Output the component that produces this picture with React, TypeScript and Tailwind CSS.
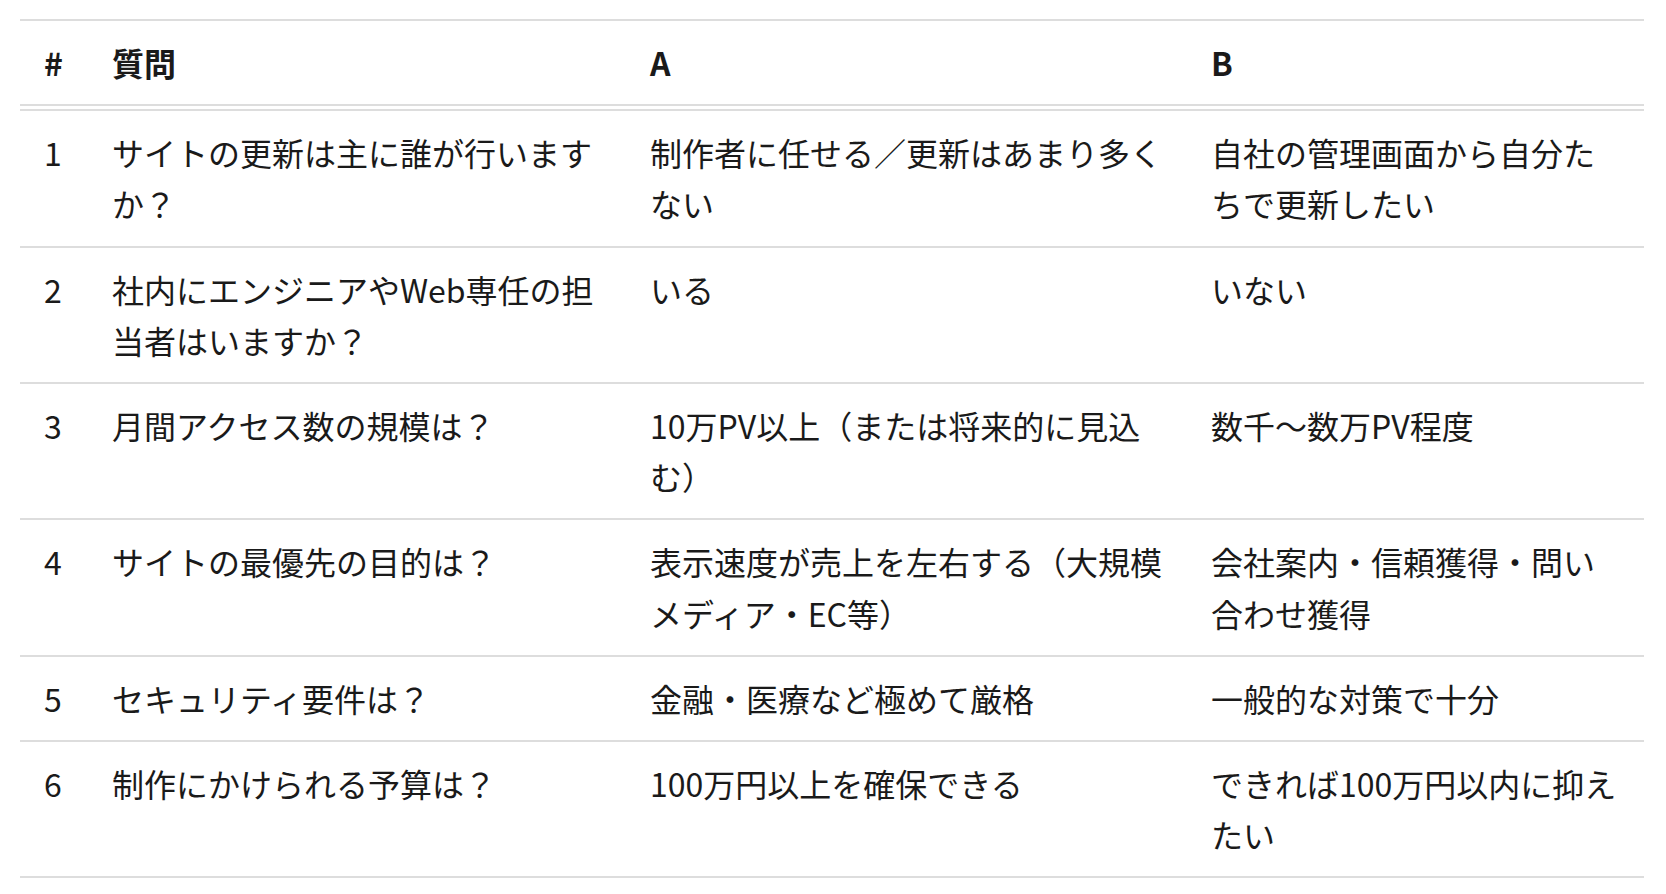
const rows = [
  {
    no: "1",
    q: "サイトの更新は主に誰が行いますか？",
    a: "制作者に任せる／更新はあまり多くない",
    b: "自社の管理画面から自分たちで更新したい",
  },
  {
    no: "2",
    q: "社内にエンジニアやWeb専任の担当者はいますか？",
    a: "いる",
    b: "いない",
  },
  {
    no: "3",
    q: "月間アクセス数の規模は？",
    a: "10万PV以上（または将来的に見込む）",
    b: "数千〜数万PV程度",
  },
  {
    no: "4",
    q: "サイトの最優先の目的は？",
    a: "表示速度が売上を左右する（大規模メディア・EC等）",
    b: "会社案内・信頼獲得・問い合わせ獲得",
  },
  {
    no: "5",
    q: "セキュリティ要件は？",
    a: "金融・医療など極めて厳格",
    b: "一般的な対策で十分",
  },
  {
    no: "6",
    q: "制作にかけられる予算は？",
    a: "100万円以上を確保できる",
    b: "できれば100万円以内に抑えたい",
  },
];

export default function App() {
  return (
    <div
      className="min-h-screen bg-white px-5 pt-[19px] text-[#1a1a1a]"
      style={{ fontFamily: '"Noto Sans CJK JP", "Noto Sans", sans-serif' }}
    >
      <table className="w-[1624px] table-fixed border-collapse text-[32px] leading-[1.6]">
        <colgroup>
          <col className="w-[68px]" />
          <col className="w-[538px]" />
          <col className="w-[561px]" />
          <col className="w-[457px]" />
        </colgroup>
        <thead>
          <tr className="border-t-2 border-b-[7px] border-double border-t-[#dddddd] border-b-[#dddddd] [border-top-style:solid]">
            <th className="px-6 py-4 text-left font-bold">#</th>
            <th className="px-6 py-4 text-left font-bold">質問</th>
            <th className="px-6 py-4 text-left font-bold">A</th>
            <th className="px-6 py-4 text-left font-bold">B</th>
          </tr>
        </thead>
        <tbody>
          {rows.map((r) => (
            <tr key={r.no} className="border-b-2 border-[#dddddd] align-top">
              <td className="px-6 py-4">{r.no}</td>
              <td className="px-6 py-4">{r.q}</td>
              <td className="px-6 py-4">{r.a}</td>
              <td className="px-6 py-4">{r.b}</td>
            </tr>
          ))}
        </tbody>
      </table>
    </div>
  );
}
